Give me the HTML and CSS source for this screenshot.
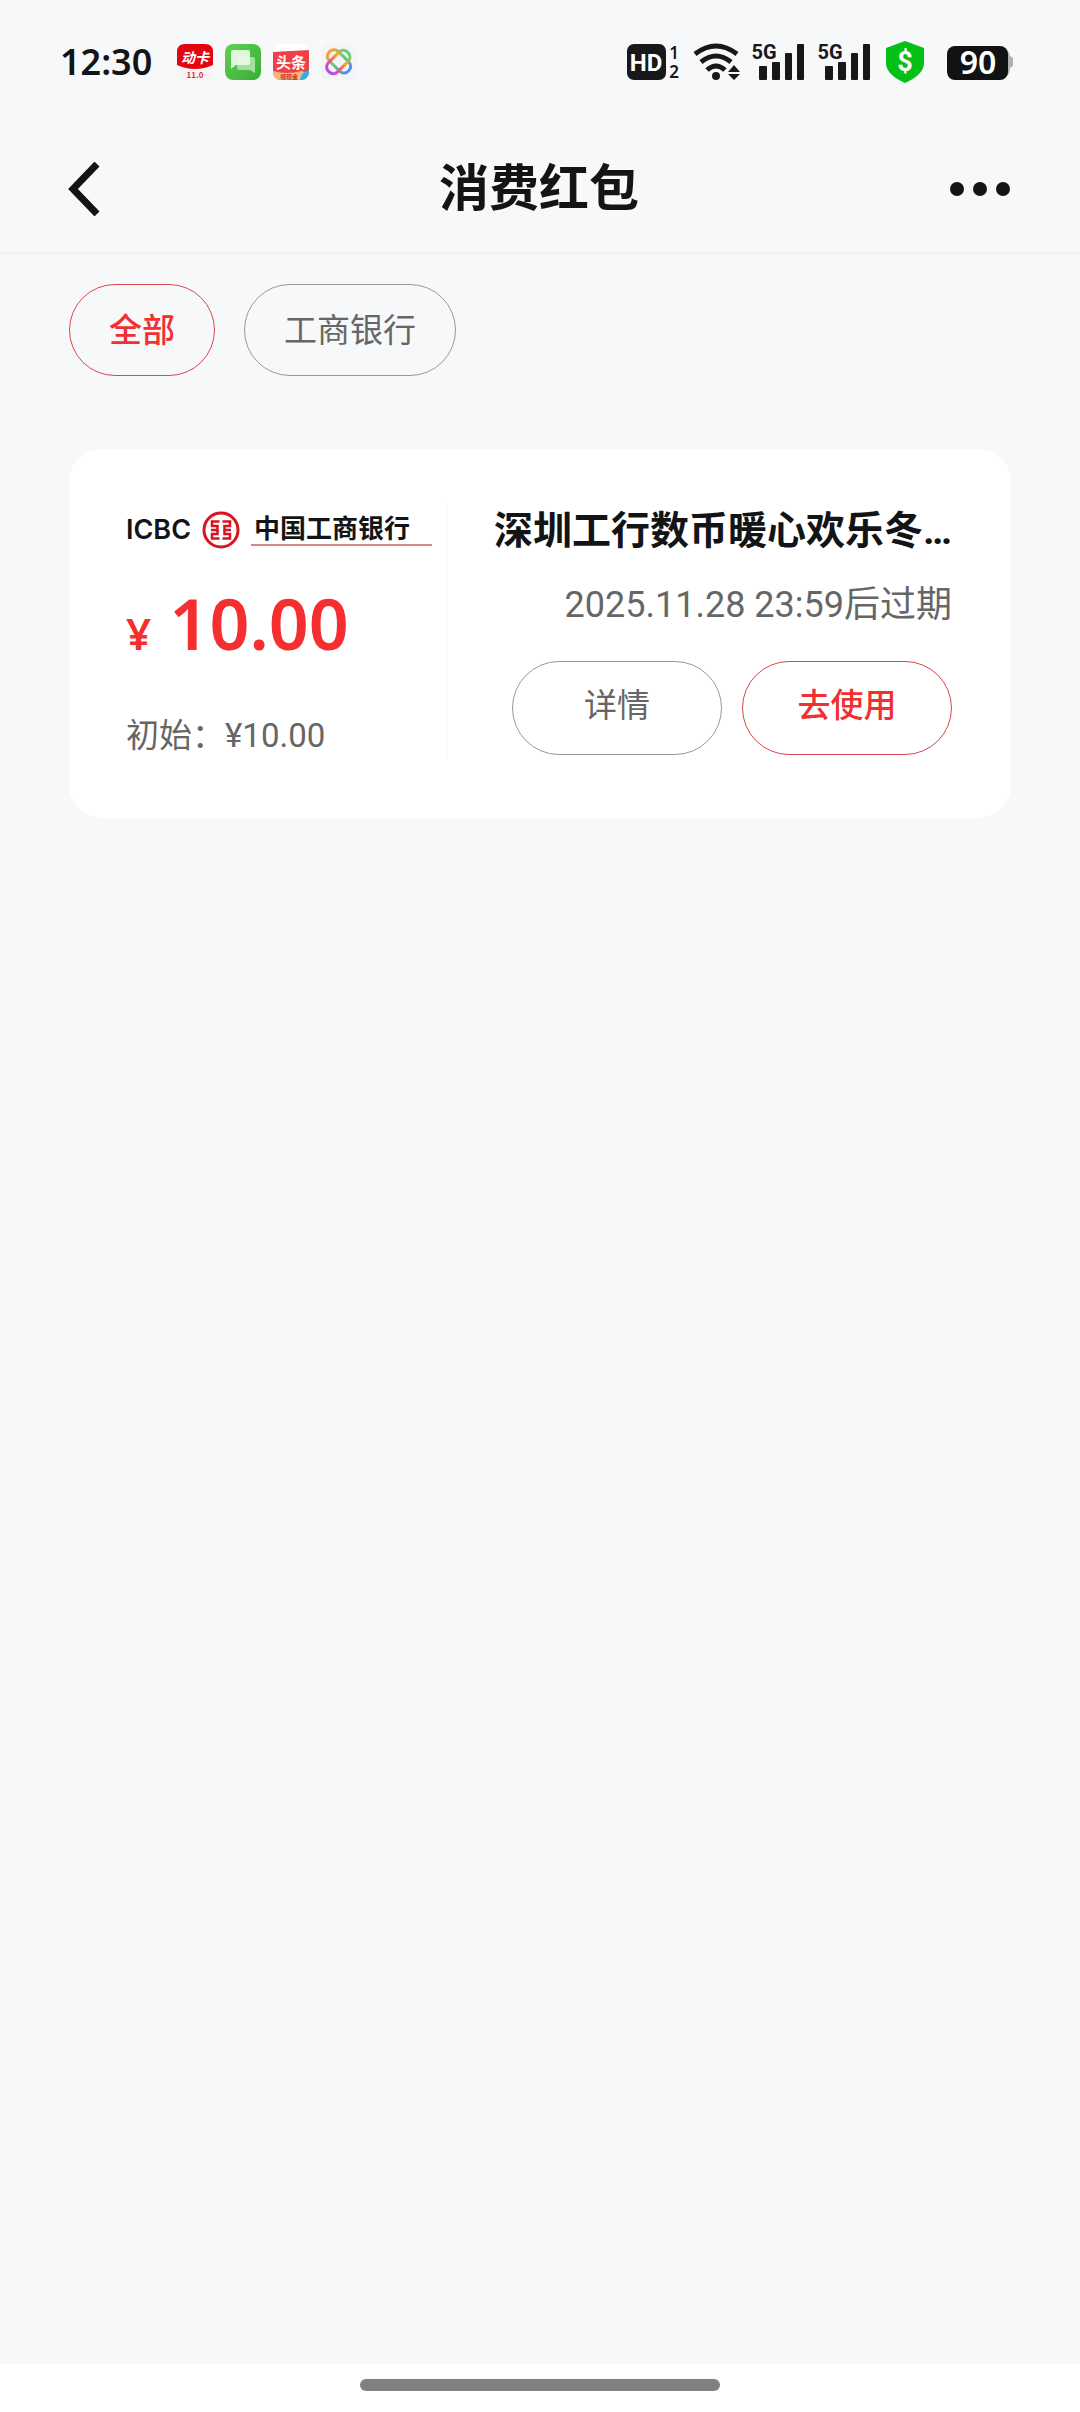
FILE: index.html
```html
<!DOCTYPE html>
<html lang="zh-CN">
<head>
<meta charset="utf-8">
<meta name="viewport" content="width=device-width, initial-scale=1">
<title>消费红包</title>
<link rel="stylesheet" href="styles.css">
</head>
<body>
<div class="status">
  <span class="time">12:30</span>
  <div class="apps">
    <svg width="36" height="36" viewBox="0 0 36 36" aria-hidden="true">
      <rect width="36" height="36" rx="8" fill="#fbf3f3"/>
      <path d="M0 8Q0 0 8 0H28Q36 0 36 8V21Q18 29 0 21Z" fill="#e2050f"/>
      <text x="18" y="19" class="app-text" font-size="14" font-style="italic" fill="#fff">动卡</text>
      <text x="18" y="34" class="app-text" font-size="8" fill="#e0303a">11.0</text>
    </svg>
    <svg width="36" height="36" viewBox="0 0 36 36" aria-hidden="true">
      <defs><linearGradient id="green" x1="0" y1="0" x2="1" y2="1"><stop offset="0" stop-color="#5fd251"/><stop offset="1" stop-color="#38ad38"/></linearGradient></defs>
      <rect width="36" height="36" rx="8" fill="url(#green)"/>
      <path d="M12 13H28Q30 13 30 15V29L25 26H14Q12 26 12 24Z" fill="#a5dfa0"/>
      <path d="M8 6H23Q25 6 25 8V19Q25 21 23 21H11L6 25V8Q6 6 8 6Z" fill="#e9f8e7" opacity=".95"/>
    </svg>
    <svg width="36" height="36" viewBox="0 0 36 36" aria-hidden="true">
      <defs><clipPath id="round"><rect width="36" height="36" rx="8"/></clipPath></defs>
      <g clip-path="url(#round)">
        <rect width="36" height="36" fill="#fff"/>
        <path d="M0 8L36 6V36H0Z" fill="#f13f45"/>
        <path d="M0 27Q14 31 28 27L36 29V36H0Z" fill="#fbb57c"/>
        <path d="M27 36Q28 28 36 26V36Z" fill="#28b5e3"/>
        <text x="18" y="24" class="app-text" font-size="15" fill="#fff">头条</text>
        <text x="16" y="35" class="app-text" font-size="6" fill="#c4372c">领现金</text>
      </g>
    </svg>
    <svg width="36" height="36" viewBox="0 0 36 36" aria-hidden="true">
      <defs><linearGradient id="rainbow" x1="0" y1="0" x2="1" y2="0"><stop offset="0" stop-color="#b04cf0"/><stop offset=".35" stop-color="#f0568c"/><stop offset=".65" stop-color="#ffa41c"/><stop offset="1" stop-color="#54d47c"/></linearGradient>
      <linearGradient id="cool" x1="0" y1="0" x2="1" y2="0"><stop offset="0" stop-color="#ff9a34"/><stop offset=".45" stop-color="#68cf74"/><stop offset="1" stop-color="#4c8cf4"/></linearGradient></defs>
      <rect width="36" height="36" rx="8" fill="#f3f4f6"/>
      <g fill="none" stroke-width="3">
        <rect x="4" y="11" width="27" height="13" rx="6" transform="rotate(45 18 18)" stroke="url(#cool)"/>
        <rect x="4" y="11" width="27" height="13" rx="6" transform="rotate(-45 18 18)" stroke="url(#rainbow)"/>
      </g>
    </svg>
  </div>
  <svg class="signals" width="388" height="44" viewBox="0 0 388 44" aria-label="信号与电量">
    <g fill="#17181a">
      <rect x="0" y="4" width="39" height="36" rx="7"/>
      <text x="19" y="31" class="hd" fill="#fff">HD</text>
      <text x="47" y="19" class="sim">1</text>
      <text x="47" y="38" class="sim">2</text>
      <circle cx="89" cy="36" r="4"/>
      <g fill="none" stroke="#17181a" stroke-width="5">
        <path d="M68 14Q89 -2 110 14"/>
        <path d="M74 22Q89 10 104 22"/>
        <path d="M80 30Q89 22 98 30"/>
      </g>
      <path d="M107 25L113 32H101ZM107 40L113 34H101Z"/>
      <g id="bars">
        <text x="137" y="19" class="gen">5G</text>
        <rect x="132" y="26" width="8" height="14" rx="1"/>
        <rect x="145" y="22" width="8" height="18" rx="1"/>
        <rect x="158" y="13" width="7" height="27" rx="1"/>
        <rect x="170" y="4" width="7" height="36" rx="1"/>
      </g>
      <use href="#bars" x="66"/>
    </g>
    <path d="M278 1L297 8V24Q296 35 278 43Q260 35 259 24V8Z" fill="#02c015"/>
    <text x="278" y="31" class="dollar" fill="#fff">$</text>
    <path d="M380 10Q383 13 383 16L386 18V26L383 28Q383 33 380 36Z" fill="#afb0b2"/>
    <rect x="320" y="6" width="61" height="34" rx="8" fill="#111213"/>
    <text x="351" y="34" class="level" fill="#fff">90</text>
  </svg>
</div>

<header class="bar">
  <button class="icon-btn" type="button" aria-label="返回">
    <svg width="32" height="54" viewBox="0 0 32 54"><path d="M29 2L5 27L29 52" fill="none" stroke="#131415" stroke-width="7"/></svg>
  </button>
  <h1>消费红包</h1>
  <button class="icon-btn" type="button" aria-label="更多">
    <svg width="60" height="14" viewBox="0 0 60 14" fill="#131415"><circle cx="7" cy="7" r="7"/><circle cx="30" cy="7" r="7"/><circle cx="53" cy="7" r="7"/></svg>
  </button>
</header>

<main>
  <nav class="chips">
    <button class="pill active" type="button">全部</button>
    <button class="pill" type="button">工商银行</button>
  </nav>

  <article class="card">
    <section class="value">
      <div class="logo">
        <span class="icbc">ICBC</span>
        <svg width="38" height="38" viewBox="-19 -19 38 38" fill="none" stroke="#d7141f" aria-hidden="true">
          <circle r="17" stroke-width="3"/>
          <g stroke-width="2.500">
            <path d="M-1.500 -8.500H-9V-4H-3.500V0H-10"/>
            <path d="M-1.500 8.500H-9V4H-3.500V0"/>
            <path d="M1.500 -8.500H9V-4H3.500V0H10"/>
            <path d="M1.500 8.500H9V4H3.500V0"/>
          </g>
        </svg>
        <span class="bank">中国工商银行</span>
      </div>
      <p class="amount"><span class="yen">¥</span> 10.00</p>
      <p class="initial">初始：¥10.00</p>
    </section>
    <section class="info">
      <h2>深圳工行数币暖心欢乐冬…</h2>
      <p class="expiry">2025.11.28 23:59后过期</p>
      <div class="actions">
        <button class="pill" type="button">详情</button>
        <button class="pill active" type="button">去使用</button>
      </div>
    </section>
  </article>
</main>

<footer class="home"><span></span></footer>
</body>
</html>
```
FILE: styles.css
```css
* { box-sizing: border-box; }

body {
  margin: 0;
  min-height: 100vh;
  display: flex;
  flex-direction: column;
  background: #f7f8fa;
  color: #131415;
  font-family: Roboto, "Noto Sans CJK SC", sans-serif;
}

h1, h2, p { margin: 0; }

button {
  padding: 0;
  border: 0;
  background: none;
  font-family: inherit;
}

svg { display: block; flex: none; }

/* status bar */
.status {
  display: flex;
  align-items: center;
  height: 124px;
  padding: 0 65px 0 60px;
}

.time {
  font: 600 36px/44px "Noto Sans", sans-serif;
}

.apps {
  display: flex;
  gap: 12px;
  margin-left: 25px;
}

.signals { margin-left: auto; }

.app-text, .hd, .sim, .gen, .dollar, .level { text-anchor: middle; font-weight: 700; }
.app-text { font-family: "Noto Sans CJK SC", sans-serif; }
.hd { font-size: 24px; }
.sim { font: 600 17px "Noto Sans", sans-serif; }
.gen { font-size: 20px; }
.dollar { font-size: 27px; }
.level { font: 600 32px "Noto Sans", sans-serif; }

/* title bar */
.bar {
  display: grid;
  grid-template-columns: 1fr auto 1fr;
  align-items: center;
  height: 130px;
  padding: 2px 70px 0 68px;
  border-bottom: 2px solid #f1f2f4;
}

.bar h1 {
  font-size: 50px;
  line-height: 64px;
  font-weight: 700;
}

.icon-btn:last-child { justify-self: end; }

/* content */
main {
  flex: 1;
  padding: 30px 69px;
}

.chips {
  display: flex;
  gap: 29px;
}

.pill {
  height: 94px;
  border: 1px solid #999;
  border-radius: 47px;
  color: #666;
  font-size: 33px;
  line-height: 48px;
}

.pill.active {
  border-color: #d8474c;
  color: #f03031;
  font-weight: 500;
}

.chips .pill {
  height: 92px;
  padding: 2px 39px 0;
}

.card {
  display: flex;
  margin-top: 73px;
  padding: 54px 59px 58px 57px;
  border-radius: 32px;
  background: #fff;
}

.value {
  display: flex;
  flex-direction: column;
  flex: 0 0 39%;
  border-right: 2px solid #fafafb;
}

.logo {
  display: flex;
  align-items: center;
  height: 54px;
  gap: 11px;
}

.icbc { font: 600 27px/38px Inter, sans-serif; }

.bank {
  width: 181px;
  padding-left: 3px;
  border-bottom: 2px solid #d08a8d;
  font-size: 26px;
  line-height: 30px;
  font-weight: 700;
}

.amount {
  margin-top: 22px;
  color: #f52f30;
  font: 600 70px/88px "Noto Sans", sans-serif;
}

.yen { font-size: 44px; }

.initial {
  margin-top: auto;
  color: #666;
  font-size: 33px;
  line-height: 48px;
}

.info {
  flex: 1;
  min-width: 0;
  padding-bottom: 5px;
  text-align: right;
}

.info h2 {
  font-size: 39px;
  line-height: 56px;
  font-weight: 700;
  white-space: nowrap;
}

.expiry {
  margin-top: 20px;
  color: #666;
  font-size: 36px;
  line-height: 52px;
}

.actions {
  display: flex;
  justify-content: flex-end;
  gap: 20px;
  margin-top: 30px;
}

.actions .pill {
  width: 210px;
  padding-bottom: 4px;
}

/* gesture bar */
.home {
  display: flex;
  justify-content: center;
  height: 48px;
  padding-top: 15px;
  background: #fff;
}

.home span {
  width: 33.333%;
  height: 12px;
  border-radius: 6px;
  background: #808080;
}
```
